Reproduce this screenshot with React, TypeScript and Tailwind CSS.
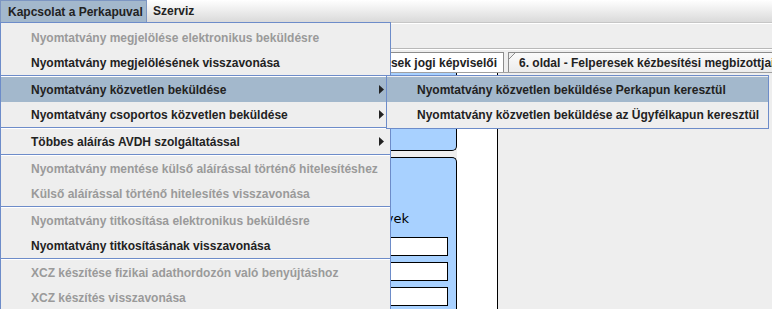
import React from "react"

type Item =
  | { kind: "item"; label: string; disabled?: boolean; selected?: boolean; arrow?: boolean }
  | { kind: "sep" }

const mainItems: Item[] = [
  { kind: "item", label: "Nyomtatvány megjelölése elektronikus beküldésre", disabled: true },
  { kind: "item", label: "Nyomtatvány megjelölésének visszavonása" },
  { kind: "sep" },
  { kind: "item", label: "Nyomtatvány közvetlen beküldése", selected: true, arrow: true },
  { kind: "item", label: "Nyomtatvány csoportos közvetlen beküldése", arrow: true },
  { kind: "sep" },
  { kind: "item", label: "Többes aláírás AVDH szolgáltatással", arrow: true },
  { kind: "sep" },
  { kind: "item", label: "Nyomtatvány mentése külső aláírással történő hitelesítéshez", disabled: true },
  { kind: "item", label: "Külső aláírással történő hitelesítés visszavonása", disabled: true },
  { kind: "sep" },
  { kind: "item", label: "Nyomtatvány titkosítása elektronikus beküldésre", disabled: true },
  { kind: "item", label: "Nyomtatvány titkosításának visszavonása" },
  { kind: "sep" },
  { kind: "item", label: "XCZ készítése fizikai adathordozón való benyújtáshoz", disabled: true },
  { kind: "item", label: "XCZ készítés visszavonása", disabled: true },
]

const subItems: Item[] = [
  { kind: "item", label: "Nyomtatvány közvetlen beküldése Perkapun keresztül", selected: true },
  { kind: "item", label: "Nyomtatvány közvetlen beküldése az Ügyfélkapun keresztül" },
]

function Arrow() {
  return (
    <svg width="5" height="9" viewBox="0 0 5 9" className="shrink-0">
      <polygon points="0,0 5,4.5 0,9" fill="#222" />
    </svg>
  )
}

function MenuRows({ items, pl }: { items: Item[]; pl: string }) {
  return (
    <>
      {items.map((it, i) =>
        it.kind === "sep" ? (
          <div key={i} className="h-[2px] border-t border-[#6d8cc9] border-b border-b-white" />
        ) : (
          <div
            key={i}
            className={`h-[25px] flex items-center justify-between pr-[6px] ${pl} ${
              it.selected ? "bg-[#a3b8cc]" : ""
            } ${it.disabled ? "text-[#9a9a9a]" : "text-[#222]"}`}
          >
            <span className="whitespace-nowrap">{it.label}</span>
            {it.arrow && <Arrow />}
          </div>
        ),
      )}
    </>
  )
}

export default function App() {
  return (
    <div className="relative w-[772px] h-[309px] overflow-hidden bg-[#eeeeee] font-['Liberation_Sans',Arial,sans-serif] text-[12px] font-bold text-[#222]">
      {/* menu bar */}
      <div className="flex h-[22px] bg-gradient-to-b from-white to-[#dadada]">
        <div className="flex items-center w-[147px] pl-[7px] bg-[#a3b8cc] border-l border-t border-r border-[#7d96c2]">
          Kapcsolat a Perkapuval
        </div>
        <div className="flex items-center pl-[6px]">Szerviz</div>
      </div>

      {/* toolbar strip */}
      <div className="h-[27px] border-t border-[#c6c6c6] border-b border-b-[#b8b8b8]">
        <div className="h-[1px] bg-white" />
      </div>
      <div className="h-[1px] bg-white" />

      {/* tabs */}
      <div className="flex h-[23px] pt-[2px] border-b border-[#a0a0a0]">
        <div className="ml-[250px] w-[254px] flex items-center justify-end pr-[6px] bg-white border-t border-r border-[#8c8c8c] whitespace-nowrap">
          5. oldal - Felperesek jogi képviselői
        </div>
        <div className="relative ml-[4px] min-w-0 flex-1 flex items-center pl-[10px] bg-gradient-to-b from-[#fbfbfb] to-[#ececec] border-t border-l border-[#8c8c8c] overflow-hidden">
          <span className="whitespace-nowrap">6. oldal - Felperesek kézbesítési megbizottjai</span>
          <svg width="8" height="8" viewBox="0 0 8 8" className="absolute -left-px -top-px">
            <polygon points="0,0 8,0 0,8" fill="#eeeeee" />
            <line x1="0" y1="8" x2="8" y2="0" stroke="#8c8c8c" strokeWidth="1" />
          </svg>
        </div>
      </div>

      {/* tab content */}
      <div className="flex h-[240px]">
        <div className="w-[457px] flex flex-col gap-[6px]">
          <div className="h-[78px] bg-[#a8d1ff] border-r border-b border-black rounded-br-[5px]" />
          <div className="flex-1 bg-[#a8d1ff] border-r border-t border-black rounded-tr-[5px] flex flex-col items-end pr-[8px] pt-[53px]">
            <div className="mr-[39px] h-[16px] leading-[16px] font-normal text-[13px] text-black font-['DejaVu_Sans',sans-serif] whitespace-nowrap">
              Egyéb szervek
            </div>
            <div className="mt-[10px] flex flex-col gap-[6px]">
              <div className="w-[120px] h-[19px] bg-white border border-black" />
              <div className="w-[120px] h-[19px] bg-white border border-black" />
              <div className="w-[120px] h-[19px] bg-white border border-black" />
            </div>
          </div>
        </div>
        <div className="w-[41px] bg-white border-r border-black" />
        <div className="flex-1" />
      </div>

      {/* main popup menu */}
      <div className="absolute left-0 top-[22px] w-[391px] h-[300px] bg-[#eeeeee] border border-[#6d8cc9] pt-[2px]">
        <MenuRows items={mainItems} pl="pl-[30px]" />
      </div>

      {/* submenu */}
      <div className="absolute left-[386px] top-[75px] w-[383px] bg-[#eeeeee] border border-[#6d8cc9] py-[1px]">
        <MenuRows items={subItems} pl="pl-[30px]" />
      </div>
    </div>
  )
}
